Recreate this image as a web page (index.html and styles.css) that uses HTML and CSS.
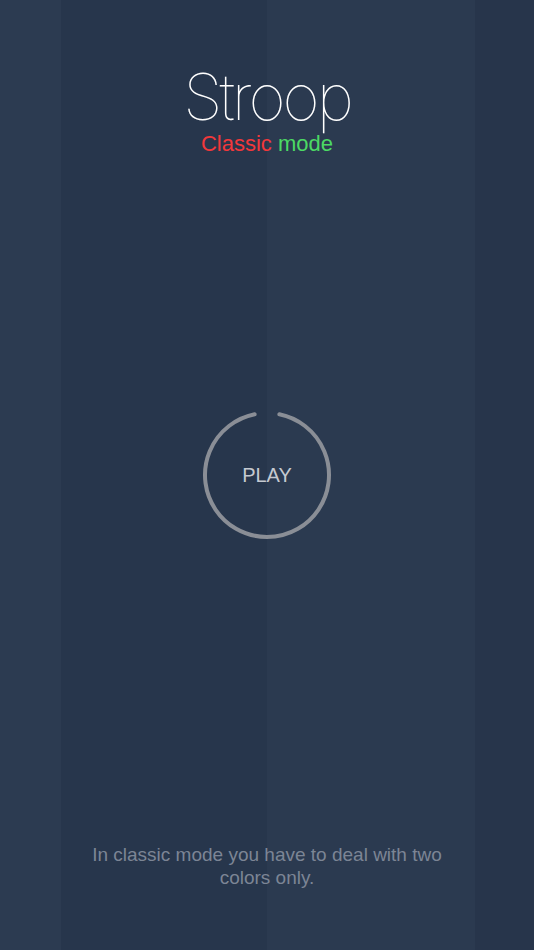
FILE: index.html
```html
<!DOCTYPE html>
<html>
<head>
<meta charset="utf-8">
<link rel="stylesheet" href="styles.css">
</head>
<body>
<div class="page">
  <header class="header">
    <h1 class="title">Stroop</h1>
    <p class="subtitle"><span class="red">Classic</span> <span class="green">mode</span></p>
  </header>
  <main class="middle">
    <button class="play">
      <svg class="ring" width="140" height="140" viewBox="0 0 140 140">
        <path d="M82.36 9.24 A62 62 0 1 1 57.64 9.24" fill="none" stroke="#8a8e96" stroke-width="4" stroke-linecap="round"/>
      </svg>
      <span class="play-label">PLAY</span>
    </button>
  </main>
  <footer class="footer">
    <p class="desc">In classic mode you have to deal with two<br>colors only.</p>
  </footer>
</div>
</body>
</html>
```
FILE: styles.css
```css
html, body {
  margin: 0;
  padding: 0;
}
.page {
  width: 534px;
  height: 950px;
  display: flex;
  flex-direction: column;
  background: linear-gradient(to right,
    #2c3b51 0, #2c3b51 61px,
    #27364c 61px, #27364c 267px,
    #2b3a50 267px, #2b3a50 475px,
    #27354b 475px, #27354b 534px);
  font-family: "Liberation Sans", Arial, sans-serif;
}
.header {
  height: 170px;
  box-sizing: border-box;
  padding-top: 63px;
  text-align: center;
}
.title {
  margin: 0;
  font-family: "Inter", "Roboto", sans-serif;
  font-weight: 100;
  font-size: 64px;
  line-height: 68px;
  color: #ffffff;
  letter-spacing: -3px;
}
.subtitle {
  margin: 0;
  font-size: 22px;
  line-height: 26px;
}
.red { color: #f2383b; }
.green { color: #4cd964; }
.middle {
  flex: 1;
  display: flex;
  align-items: center;
  justify-content: center;
}
.play {
  position: relative;
  width: 140px;
  height: 140px;
  padding: 0;
  border: 0;
  background: transparent;
  display: flex;
  align-items: center;
  justify-content: center;
}
.ring {
  position: absolute;
  left: 0;
  top: 0;
}
.play-label {
  font-family: "Liberation Sans", Arial, sans-serif;
  font-size: 20px;
  color: #c5c9d0;
}
.footer {
  height: 170px;
  box-sizing: border-box;
  padding-top: 63px;
  text-align: center;
}
.desc {
  margin: 0;
  font-size: 19px;
  line-height: 23px;
  color: #7c8595;
}
```
